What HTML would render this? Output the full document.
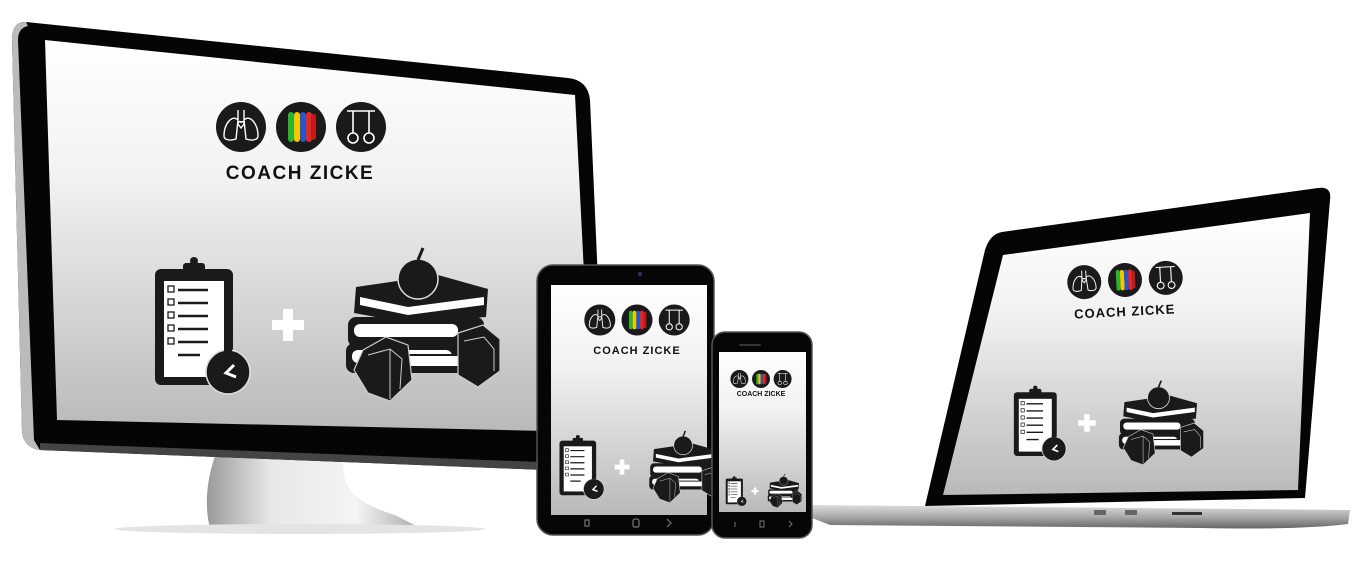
<!DOCTYPE html>
<html><head><meta charset="utf-8"><style>
html,body{margin:0;padding:0;background:#fff;width:1354px;height:573px;overflow:hidden}
svg{display:block}
.t{font-family:"Liberation Sans Narrow","Liberation Sans",sans-serif;font-weight:bold;fill:#111;text-anchor:middle}
</style></head><body>
<svg width="1354" height="573" viewBox="0 0 1354 573" xmlns="http://www.w3.org/2000/svg">
<defs>
<linearGradient id="scr" x1="0" y1="0" x2="0" y2="1"><stop offset="0" stop-color="#fff"/><stop offset=".35" stop-color="#f2f2f2"/><stop offset="1" stop-color="#b9b9b9"/></linearGradient>
<linearGradient id="silver" x1="0" y1="0" x2="1" y2="0"><stop offset="0" stop-color="#9a9a9a"/><stop offset=".3" stop-color="#e8e8e8"/><stop offset=".7" stop-color="#f4f4f4"/><stop offset="1" stop-color="#aaa"/></linearGradient>
<linearGradient id="base" x1="0" y1="0" x2="0" y2="1"><stop offset="0" stop-color="#ddd"/><stop offset=".5" stop-color="#aaa"/><stop offset="1" stop-color="#666"/></linearGradient>
<g id="logo">
 <circle cx="-60" cy="0" r="25" fill="#1a1a1a"/>
 <path d="M-63-17v10M-57-17v10M-63-7c-6-6-14 4-14 16 0 4 6 5 12 3zM-57-7c6-6 14 4 14 16 0 4-6 5-12 3zM-63-3l3 4 3-4c0-3-3-3-3-1 0-2-3-2-3 1z" fill="none" stroke="#fff" stroke-width="1.4"/>
 <circle cx="0" cy="0" r="25" fill="#1a1a1a"/>
 <rect x="-13" y="-15" width="6" height="30" rx="3" fill="#2cb52c"/>
 <rect x="-7" y="-15" width="6" height="30" rx="3" fill="#f4c700"/>
 <rect x="-1" y="-15" width="6" height="30" rx="3" fill="#2a55c8"/>
 <rect x="5" y="-15" width="6" height="30" rx="3" fill="#e02a2a"/>
 <rect x="10" y="-13" width="5" height="26" rx="2.5" fill="#c01a1a"/>
 <circle cx="60" cy="0" r="25" fill="#1a1a1a"/>
 <path d="M46-16h28M52-16v22M68-16v22" stroke="#fff" stroke-width="1.6" fill="none"/>
 <circle cx="52" cy="11" r="5" fill="none" stroke="#fff" stroke-width="1.6"/>
 <circle cx="68" cy="11" r="5" fill="none" stroke="#fff" stroke-width="1.6"/>
</g>
<g id="bot">
 <rect x="-133" y="-56" width="78" height="116" rx="6" fill="#1a1a1a"/>
 <rect x="-105" y="-62" width="22" height="9" rx="3" fill="#1a1a1a"/>
 <circle cx="-94" cy="-64" r="4" fill="#1a1a1a"/>
 <rect x="-124" y="-44" width="60" height="96" fill="#fff"/>
 <g stroke="#1a1a1a" stroke-width="2.5">
  <path d="M-110-35h30M-110-22h30M-110-9h30M-110 4h30M-110 17h30M-110 30h22"/>
 </g>
 <g fill="none" stroke="#1a1a1a" stroke-width="1.3">
  <rect x="-120" y="-39" width="6" height="6"/><rect x="-120" y="-26" width="6" height="6"/><rect x="-120" y="-13" width="6" height="6"/><rect x="-120" y="0" width="6" height="6"/><rect x="-120" y="13" width="6" height="6"/>
 </g>
 <circle cx="-60" cy="47" r="22" fill="#1a1a1a" stroke="#ddd" stroke-width="1.5"/>
 <rect x="-64" y="21" width="8" height="5" fill="#1a1a1a"/>
 <path d="M-52 52l-10-4 8-8" stroke="#fff" stroke-width="3" fill="none"/>
 <path d="M-5-16h10v11h11v10H5v11H-5V5h-11V-5h11z" fill="#fff"/>
 <!-- books -->
 <rect x="58" y="18" width="132" height="30" rx="8" fill="#1a1a1a"/>
 <rect x="64" y="25" width="100" height="13" rx="6" fill="#fff"/>
 <rect x="60" y="-8" width="136" height="30" rx="8" fill="#1a1a1a"/>
 <rect x="66" y="-1" width="104" height="13" rx="6" fill="#fff"/>
 <polygon points="68,-38 150,-50 200,-36 198,-8 120,-2 66,-12" fill="#1a1a1a"/>
 <path d="M72,-28 L120,-18 L196,-28 L196,-20 L120,-10 L72,-20Z" fill="#fff"/>
 <circle cx="130" cy="-46" r="20" fill="#1a1a1a" stroke="#ddd" stroke-width="1.5"/>
 <path d="M130-65l5-12" stroke="#1a1a1a" stroke-width="3"/>
 <!-- dumbbell -->
 <rect x="110" y="30" width="80" height="12" fill="#fff" stroke="#1a1a1a" stroke-width="2"/>
 <polygon points="75,25 98,12 120,20 124,55 102,76 80,68 66,45" fill="#1a1a1a" stroke="#ccc" stroke-width="1.2"/>
 <path d="M80 30l22 -6 12 10 -2 30M102 24v50" stroke="#ccc" fill="none" stroke-width="1"/>
 <polygon points="170,8 195,0 212,14 212,46 190,62 170,50" fill="#1a1a1a" stroke="#ccc" stroke-width="1.2"/>
 <path d="M176 16l20 -4 10 12v22" stroke="#ccc" fill="none" stroke-width="1"/>
</g>
</defs>

<!-- MONITOR stand -->
<path d="M218 448 L345 452 C340 480 345 500 395 515 L420 528 L210 528 C205 510 205 480 218 448Z" fill="url(#silver)"/>
<ellipse cx="300" cy="529" rx="185" ry="5" fill="#e4e4e4"/>
<!-- monitor bezel -->
<path d="M26 22 L568 78 Q588 80 590 100 L605 440 L545 470 L40 450 Q24 448 22 432 L12 40 Q12 21 26 22Z" fill="#050505"/>
<path d="M26 22 Q12 21 12 40 L22 432 Q24 448 40 450 L34 440 L18 40 Q18 28 28 26Z" fill="#bbb"/>
<path d="M40 450 L545 470 L540 462 L40 443Z" fill="#444"/>
<polygon points="45,40 575,95 592,432 57,420" fill="url(#scr)"/>
<use href="#logo" transform="translate(301,127)"/>
<text class="t" x="300" y="179" font-size="19" letter-spacing="1.5">COACH ZICKE</text>
<use href="#bot" transform="translate(288,325)"/>

<!-- LAPTOP -->
<path d="M812 505 L1350 510 L1348 524 Q1300 530 1200 528 L830 525 L812 518Z" fill="url(#base)"/>
<rect x="1094" y="510" width="12" height="5" fill="#666"/><rect x="1125" y="510" width="12" height="5" fill="#666"/>
<rect x="1172" y="512" width="30" height="3" fill="#333"/>
<path d="M1002 232 L1318 188 Q1332 186 1330 200 L1305 498 L925 506 L985 250 Q990 234 1002 232Z" fill="#050505"/>
<polygon points="1003,255 1310,213 1298,490 943,495" fill="url(#scr)"/>
<use href="#logo" transform="translate(1125,280) rotate(-3) scale(0.68)"/>
<text class="t" x="1125" y="316" font-size="13" letter-spacing="1" transform="rotate(-3 1125 316)">COACH ZICKE</text>
<use href="#bot" transform="translate(1087,423) scale(0.55)"/>

<!-- TABLET -->
<rect x="537" y="265" width="177" height="270" rx="16" fill="#060606" stroke="#555" stroke-width="1.5"/>
<circle cx="640" cy="274" r="2" fill="#335"/>
<rect x="551" y="285" width="156" height="230" fill="url(#scr)"/>
<use href="#logo" transform="translate(637,320) scale(0.62)"/>
<text class="t" x="637" y="354" font-size="11" letter-spacing="1">COACH ZICKE</text>
<use href="#bot" transform="translate(622,467) scale(0.47)"/>
<g fill="none" stroke="#777" stroke-width="1.2"><rect x="585" y="520" width="4" height="6"/><rect x="633" y="519" width="6" height="8" rx="2"/><path d="M667 519l4 4-4 4"/></g>

<!-- PHONE -->
<rect x="712" y="332" width="100" height="206" rx="13" fill="#060606" stroke="#555" stroke-width="1.5"/>
<rect x="739" y="344" width="22" height="2" rx="1" fill="#333"/>
<rect x="719" y="352" width="87" height="160" fill="url(#scr)"/>
<use href="#logo" transform="translate(761,379) scale(0.36)"/>
<text class="t" x="761" y="396" font-size="7">COACH ZICKE</text>
<use href="#bot" transform="translate(755,491) scale(0.22)"/>
<g fill="none" stroke="#777" stroke-width="1"><path d="M735 522v5M760 521h4v6h-4zM789 521l3 3-3 3"/></g>
</svg>
</body></html>
